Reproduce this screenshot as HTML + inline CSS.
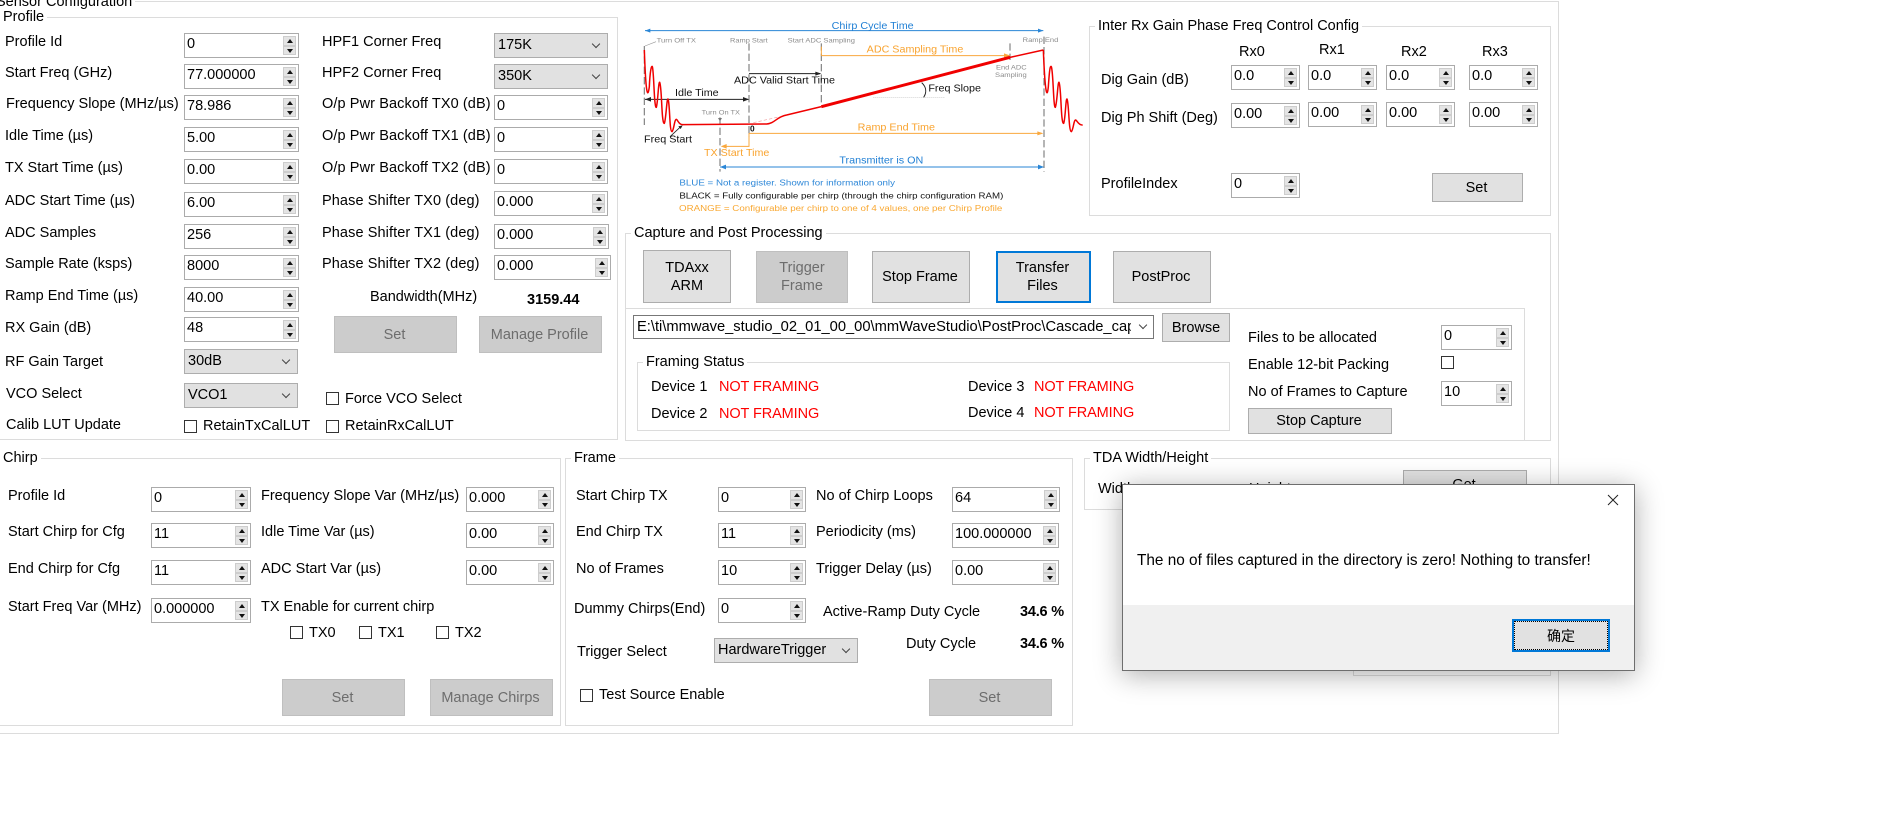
<!DOCTYPE html>
<html><head><meta charset="utf-8"><title>Sensor Configuration</title>
<style>
html,body{margin:0;padding:0;background:#fff}
#r{position:relative;width:1897px;height:823px;overflow:hidden;background:#fff;font-family:"Liberation Sans","Noto Sans CJK SC",sans-serif;font-size:14.5px;color:#000}
#r div,#r p{position:absolute;margin:0;box-sizing:border-box;white-space:nowrap}
.g{border:1px solid #dcdcdc;background:transparent}
.lg{background:#fff;padding:0 3px;height:20px;line-height:20px}
.l{height:20px;line-height:20px}
.i{height:25px;border:1px solid #ababab;background:#fff;line-height:20px;padding-left:2px;overflow:hidden}
.i b,.i u{position:absolute;right:2px;width:13px;background:#e4e4e4;border:1px solid #cdcdcd;box-sizing:border-box;display:block}
.i b{top:2px;height:10px}
.i u{top:12px;height:9px}
.i b:after,.i u:after{content:"";position:absolute;left:3px;width:0;height:0;border-left:3px solid transparent;border-right:3px solid transparent}
.i b:after{top:2px;border-bottom:4px solid #111}
.i u:after{top:2px;border-top:4px solid #111}
.sl{height:25px;border:1px solid #adadad;background:#e1e1e1;line-height:23px;padding-left:3px}
.sl i,.cb i{position:absolute;right:8px;top:7px;width:5px;height:5px;border-right:1px solid #444;border-bottom:1px solid #444;transform:rotate(45deg)}
.b{border:1px solid #adadad;background:#e1e1e1;text-align:center;display:flex;align-items:center;justify-content:center;line-height:18px}
.d{background:#ccc;border-color:#bfbfbf;color:#6d6d6d}
.c{width:13px;height:13px;border:1px solid #333;background:#fff}
.r{color:#f00}
.bd{font-weight:bold}
#dlg{left:1122px;top:484px;width:513px;height:187px;background:#fff;border:1px solid #6e6e6e;box-shadow:0 4px 26px rgba(0,0,0,.32)}
svg{position:absolute}
</style></head><body>
<div id="r">

<div class="g" style="left:-3px;top:1px;width:1562px;height:733px"></div>
<div class="lg" style="left:-7px;top:-8px">Sensor Configuration</div>

<div class="g" style="left:-3px;top:17px;width:621px;height:423px"></div>
<div class="lg" style="left:0;top:7px">Profile</div>

<div class="l" style="left:5px;top:32px">Profile Id</div>
<div class="l" style="left:5px;top:63px">Start Freq (GHz)</div>
<div class="l" style="left:6px;top:94px">Frequency Slope (MHz/µs)</div>
<div class="l" style="left:5px;top:126px">Idle Time (µs)</div>
<div class="l" style="left:5px;top:158px">TX Start Time (µs)</div>
<div class="l" style="left:5px;top:191px">ADC Start Time (µs)</div>
<div class="l" style="left:5px;top:223px">ADC Samples</div>
<div class="l" style="left:5px;top:254px">Sample Rate (ksps)</div>
<div class="l" style="left:5px;top:286px">Ramp End Time (µs)</div>
<div class="l" style="left:5px;top:318px">RX Gain (dB)</div>
<div class="l" style="left:5px;top:352px">RF Gain Target</div>
<div class="l" style="left:6px;top:384px">VCO Select</div>
<div class="l" style="left:6px;top:415px">Calib LUT Update</div>

<div class="i" style="left:184px;top:33px;width:115px">0<b></b><u></u></div>
<div class="i" style="left:184px;top:64px;width:115px">77.000000<b></b><u></u></div>
<div class="i" style="left:184px;top:95px;width:115px">78.986<b></b><u></u></div>
<div class="i" style="left:184px;top:127px;width:115px">5.00<b></b><u></u></div>
<div class="i" style="left:184px;top:159px;width:115px">0.00<b></b><u></u></div>
<div class="i" style="left:184px;top:192px;width:115px">6.00<b></b><u></u></div>
<div class="i" style="left:184px;top:224px;width:115px">256<b></b><u></u></div>
<div class="i" style="left:184px;top:255px;width:115px">8000<b></b><u></u></div>
<div class="i" style="left:184px;top:287px;width:115px">40.00<b></b><u></u></div>
<div class="i" style="left:184px;top:317px;width:115px">48<b></b><u></u></div>
<div class="sl" style="left:184px;top:349px;width:114px">30dB<i></i></div>
<div class="sl" style="left:184px;top:383px;width:114px">VCO1<i></i></div>
<div class="c" style="left:184px;top:420px"></div>
<div class="l" style="left:203px;top:416px">RetainTxCalLUT</div>
<div class="c" style="left:326px;top:420px"></div>
<div class="l" style="left:345px;top:416px">RetainRxCalLUT</div>
<div class="c" style="left:326px;top:392px"></div>
<div class="l" style="left:345px;top:389px">Force VCO Select</div>

<div class="l" style="left:322px;top:32px">HPF1 Corner Freq</div>
<div class="l" style="left:322px;top:63px">HPF2 Corner Freq</div>
<div class="l" style="left:322px;top:94px;letter-spacing:.1px">O/p Pwr Backoff TX0 (dB)</div>
<div class="l" style="left:322px;top:126px;letter-spacing:.1px">O/p Pwr Backoff TX1 (dB)</div>
<div class="l" style="left:322px;top:158px;letter-spacing:.1px">O/p Pwr Backoff TX2 (dB)</div>
<div class="l" style="left:322px;top:191px;letter-spacing:.1px">Phase Shifter TX0 (deg)</div>
<div class="l" style="left:322px;top:223px;letter-spacing:.1px">Phase Shifter TX1 (deg)</div>
<div class="l" style="left:322px;top:254px;letter-spacing:.1px">Phase Shifter TX2 (deg)</div>
<div class="l" style="left:370px;top:287px">Bandwidth(MHz)</div>
<div class="l bd" style="left:527px;top:290px">3159.44</div>

<div class="sl" style="left:494px;top:33px;width:114px">175K<i></i></div>
<div class="sl" style="left:494px;top:64px;width:114px">350K<i></i></div>
<div class="i" style="left:494px;top:95px;width:114px">0<b></b><u></u></div>
<div class="i" style="left:494px;top:127px;width:114px">0<b></b><u></u></div>
<div class="i" style="left:494px;top:159px;width:114px">0<b></b><u></u></div>
<div class="i" style="left:494px;top:191px;width:114px">0.000<b></b><u></u></div>
<div class="i" style="left:494px;top:224px;width:115px">0.000<b></b><u></u></div>
<div class="i" style="left:494px;top:255px;width:117px">0.000<b></b><u></u></div>
<div class="b d" style="left:334px;top:316px;width:123px;height:37px;padding-right:2px">Set</div>
<div class="b d" style="left:479px;top:316px;width:123px;height:37px;padding-right:2px">Manage Profile</div>

<svg style="left:620px;top:0;filter:blur(.35px)" width="480" height="230" viewBox="0 0 1440 690" font-family="Liberation Sans,sans-serif">
<g fill="none" stroke="#808080" stroke-width="3.5" stroke-dasharray="22 9">
<path d="M73 138V375M387 130V410M300 352V515M604 130V315M1170 130V180M1272 110V515"/>
</g>
<path d="M75 138L108 125" stroke="#999" stroke-width="2" fill="none"/>
<path d="M75 92H1270" stroke="#2a86d6" stroke-width="3"/>
<path d="M75 92l16-6v12zM1270 92l-16-6v12z" fill="#2a86d6"/>
<path d="M604 167V140M604 167H1165" stroke="#f9a83e" stroke-width="3" fill="none"/>
<path d="M1172 167l-20-7v14z" fill="#f9a83e"/>
<path d="M387 221H600" stroke="#222" stroke-width="3"/>
<path d="M604 221l-18-6v12z" fill="#222"/>
<path d="M75 298H385" stroke="#222" stroke-width="3"/>
<path d="M75 298l18-7v14zM387 298l-18-7v14z" fill="#222"/>
<path d="M387 400H1265" stroke="#f9a83e" stroke-width="3"/>
<path d="M1270 400l-18-6v12z" fill="#f9a83e"/>
<path d="M387 400V439H310" stroke="#f9a83e" stroke-width="3" fill="none"/>
<path d="M302 439l18-7v14z" fill="#f9a83e"/>
<path d="M300 501H1270" stroke="#2a86d6" stroke-width="3"/>
<path d="M300 501l18-7v14zM1272 501l-18-7v14z" fill="#2a86d6"/>
<path d="M760 292H975" stroke="#bbb" stroke-width="2" stroke-dasharray="3 3"/>
<path d="M905 248C920 262 920 278 911 292" stroke="#222" stroke-width="3" fill="none"/>
<path d="M400 368L480 350" stroke="#f0a0a0" stroke-width="2" stroke-dasharray="10 6"/>
<path d="M73 150C78 300 84 290 88 260C90 215 94 195 97 200C102 215 102 325 109 322C114 305 115 245 119 247C126 260 124 372 133 370C138 360 140 295 144 297C150 310 148 395 156 395C162 390 163 358 169 358C174 360 176 375 190 374L440 372C465 370 470 350 500 345L604 320" stroke="#f00000" stroke-width="4.5" fill="none"/>
<path d="M604 320L1170 172" stroke="#f00000" stroke-width="9" fill="none"/>
<path d="M1170 172L1270 150" stroke="#f00000" stroke-width="4.5" fill="none"/>
<path d="M1270 150C1276 300 1282 290 1285 260C1288 215 1290 195 1294 200C1300 215 1300 325 1306 322C1312 305 1313 245 1317 247C1324 260 1322 372 1331 370C1336 360 1337 295 1341 297C1347 310 1346 395 1354 395C1360 390 1361 360 1367 360C1372 362 1375 376 1388 375" stroke="#f00000" stroke-width="4.5" fill="none"/>
<path d="M150 410L180 382" stroke="#222" stroke-width="2.5"/>
<path d="M188 376l-13 3 7 8z" fill="#222"/>
<path d="M300 364l-6-10h12z" fill="#777"/>
<text x="635" y="87" font-size="29" fill="#1f7fd4" textLength="246" lengthAdjust="spacingAndGlyphs">Chirp Cycle Time</text>
<g font-size="20" fill="#8c8c8c">
<text x="110" y="127" textLength="118" lengthAdjust="spacingAndGlyphs">Turn Off TX</text>
<text x="330" y="127" textLength="113" lengthAdjust="spacingAndGlyphs">Ramp Start</text>
<text x="503" y="127" textLength="202" lengthAdjust="spacingAndGlyphs">Start ADC Sampling</text>
<text x="1208" y="126" textLength="107" lengthAdjust="spacingAndGlyphs">Ramp End</text>
<text x="245" y="344" textLength="115" lengthAdjust="spacingAndGlyphs">Turn On TX</text>
<text x="1128" y="209" textLength="92" lengthAdjust="spacingAndGlyphs">End ADC</text>
<text x="1125" y="231" textLength="95" lengthAdjust="spacingAndGlyphs">Sampling</text>
</g>
<g font-size="29" fill="#f9a32e">
<text x="740" y="158" textLength="290" lengthAdjust="spacingAndGlyphs">ADC Sampling Time</text>
<text x="713" y="391" textLength="232" lengthAdjust="spacingAndGlyphs">Ramp End Time</text>
<text x="252" y="468" textLength="196" lengthAdjust="spacingAndGlyphs">TX Start Time</text>
</g>
<g font-size="29" fill="#111">
<text x="342" y="250" textLength="303" lengthAdjust="spacingAndGlyphs">ADC Valid Start Time</text>
<text x="165" y="288" textLength="131" lengthAdjust="spacingAndGlyphs">Idle Time</text>
<text x="72" y="428" textLength="144" lengthAdjust="spacingAndGlyphs">Freq Start</text>
<text x="925" y="275" textLength="158" lengthAdjust="spacingAndGlyphs">Freq Slope</text>
<text x="390" y="395" font-weight="bold" font-size="25">0</text>
</g>
<text x="658" y="491" font-size="29" fill="#1f7fd4" textLength="252" lengthAdjust="spacingAndGlyphs">Transmitter is ON</text>
<text x="178" y="557" font-size="24" fill="#2f88d8" textLength="647" lengthAdjust="spacingAndGlyphs">BLUE = Not a register. Shown for information only</text>
<text x="178" y="596" font-size="24" fill="#111" textLength="972" lengthAdjust="spacingAndGlyphs">BLACK = Fully configurable per chirp (through the chirp configuration RAM)</text>
<text x="177" y="633" font-size="24" fill="#f9a832" textLength="970" lengthAdjust="spacingAndGlyphs">ORANGE = Configurable per chirp to one of 4 values, one per Chirp Profile</text>
</svg>

<div class="g" style="left:1089px;top:26px;width:462px;height:190px"></div>
<div class="lg" style="left:1095px;top:16px">Inter Rx Gain Phase Freq Control Config</div>
<div class="l" style="left:1239px;top:42px">Rx0</div>
<div class="l" style="left:1319px;top:40px">Rx1</div>
<div class="l" style="left:1401px;top:42px">Rx2</div>
<div class="l" style="left:1482px;top:42px">Rx3</div>
<div class="l" style="left:1101px;top:70px">Dig Gain (dB)</div>
<div class="l" style="left:1101px;top:108px">Dig Ph Shift (Deg)</div>
<div class="l" style="left:1101px;top:174px">ProfileIndex</div>
<div class="i" style="left:1231px;top:65px;width:69px">0.0<b></b><u></u></div>
<div class="i" style="left:1308px;top:65px;width:69px">0.0<b></b><u></u></div>
<div class="i" style="left:1386px;top:65px;width:69px">0.0<b></b><u></u></div>
<div class="i" style="left:1469px;top:65px;width:69px">0.0<b></b><u></u></div>
<div class="i" style="left:1231px;top:103px;width:69px">0.00<b></b><u></u></div>
<div class="i" style="left:1308px;top:102px;width:69px">0.00<b></b><u></u></div>
<div class="i" style="left:1386px;top:102px;width:69px">0.00<b></b><u></u></div>
<div class="i" style="left:1469px;top:102px;width:69px">0.00<b></b><u></u></div>
<div class="i" style="left:1231px;top:173px;width:69px">0<b></b><u></u></div>
<div class="b" style="left:1432px;top:173px;width:91px;height:29px;padding-right:2px">Set</div>

<div class="g" style="left:625px;top:233px;width:926px;height:208px"></div>
<div class="lg" style="left:631px;top:223px">Capture and Post Processing</div>
<div class="b" style="left:643px;top:250px;width:88px;height:53px">TDAxx<br>ARM</div>
<div class="b d" style="left:756px;top:251px;width:92px;height:52px">Trigger<br>Frame</div>
<div class="b" style="left:872px;top:251px;width:98px;height:52px;padding-right:2px">Stop Frame</div>
<div class="b" style="left:996px;top:251px;width:95px;height:52px;border:2px solid #0078d7;padding-right:2px">Transfer<br>Files</div>
<div class="b" style="left:1113px;top:251px;width:98px;height:52px;padding-right:2px">PostProc</div>
<div style="left:625px;top:308px;width:900px;height:133px;border-top:1px solid #dcdcdc;border-right:1px solid #dcdcdc"></div>

<div class="cb" style="left:633px;top:315px;width:521px;height:24px;border:1px solid #777;background:#fff;line-height:22px;padding-left:3px;overflow:hidden;font-size:14.7px"><span style="display:block;width:494px;overflow:hidden">E:\ti\mmwave_studio_02_01_00_00\mmWaveStudio\PostProc\Cascade_capture</span><i style="right:7px;top:6px"></i></div>
<div class="b" style="left:1162px;top:313px;width:68px;height:29px">Browse</div>

<div class="g" style="left:637px;top:362px;width:593px;height:69px"></div>
<div class="lg" style="left:643px;top:352px">Framing Status</div>
<div class="l" style="left:651px;top:377px">Device 1</div>
<div class="l r" style="left:719px;top:377px;letter-spacing:-.1px">NOT FRAMING</div>
<div class="l" style="left:651px;top:404px">Device 2</div>
<div class="l r" style="left:719px;top:404px;letter-spacing:-.1px">NOT FRAMING</div>
<div class="l" style="left:968px;top:377px">Device 3</div>
<div class="l r" style="left:1034px;top:377px;letter-spacing:-.1px">NOT FRAMING</div>
<div class="l" style="left:968px;top:403px">Device 4</div>
<div class="l r" style="left:1034px;top:403px;letter-spacing:-.1px">NOT FRAMING</div>

<div class="l" style="left:1248px;top:328px">Files to be allocated</div>
<div class="l" style="left:1248px;top:355px">Enable 12-bit Packing</div>
<div class="l" style="left:1248px;top:382px">No of Frames to Capture</div>
<div class="i" style="left:1441px;top:325px;width:71px">0<b></b><u></u></div>
<div class="c" style="left:1441px;top:356px"></div>
<div class="i" style="left:1441px;top:381px;width:71px">10<b></b><u></u></div>
<div class="b" style="left:1248px;top:408px;width:144px;height:26px;padding-right:2px">Stop Capture</div>

<div class="g" style="left:-3px;top:458px;width:564px;height:268px"></div>
<div class="lg" style="left:0;top:448px">Chirp</div>
<div class="l" style="left:8px;top:486px">Profile Id</div>
<div class="l" style="left:8px;top:522px">Start Chirp for Cfg</div>
<div class="l" style="left:8px;top:559px">End Chirp for Cfg</div>
<div class="l" style="left:8px;top:597px">Start Freq Var (MHz)</div>
<div class="i" style="left:151px;top:487px;width:100px">0<b></b><u></u></div>
<div class="i" style="left:151px;top:523px;width:100px">11<b></b><u></u></div>
<div class="i" style="left:151px;top:560px;width:100px">11<b></b><u></u></div>
<div class="i" style="left:151px;top:598px;width:100px">0.000000<b></b><u></u></div>
<div class="l" style="left:261px;top:486px">Frequency Slope Var (MHz/µs)</div>
<div class="l" style="left:261px;top:522px">Idle Time Var (µs)</div>
<div class="l" style="left:261px;top:559px">ADC Start Var (µs)</div>
<div class="l" style="left:261px;top:597px">TX Enable for current chirp</div>
<div class="i" style="left:466px;top:487px;width:88px">0.000<b></b><u></u></div>
<div class="i" style="left:466px;top:523px;width:88px">0.00<b></b><u></u></div>
<div class="i" style="left:466px;top:560px;width:88px">0.00<b></b><u></u></div>
<div class="c" style="left:290px;top:626px"></div>
<div class="l" style="left:309px;top:623px">TX0</div>
<div class="c" style="left:359px;top:626px"></div>
<div class="l" style="left:378px;top:623px">TX1</div>
<div class="c" style="left:436px;top:626px"></div>
<div class="l" style="left:455px;top:623px">TX2</div>
<div class="b d" style="left:282px;top:679px;width:123px;height:37px;padding-right:2px">Set</div>
<div class="b d" style="left:430px;top:679px;width:123px;height:37px;padding-right:2px">Manage Chirps</div>

<div class="g" style="left:565px;top:458px;width:508px;height:268px"></div>
<div class="lg" style="left:571px;top:448px">Frame</div>
<div class="l" style="left:576px;top:486px">Start Chirp TX</div>
<div class="l" style="left:576px;top:522px">End Chirp TX</div>
<div class="l" style="left:576px;top:559px">No of Frames</div>
<div class="l" style="left:574px;top:599px">Dummy Chirps(End)</div>
<div class="l" style="left:577px;top:642px">Trigger Select</div>
<div class="i" style="left:718px;top:487px;width:88px">0<b></b><u></u></div>
<div class="i" style="left:718px;top:523px;width:88px">11<b></b><u></u></div>
<div class="i" style="left:718px;top:560px;width:88px">10<b></b><u></u></div>
<div class="i" style="left:718px;top:598px;width:88px">0<b></b><u></u></div>
<div class="l" style="left:816px;top:486px">No of Chirp Loops</div>
<div class="l" style="left:816px;top:522px">Periodicity (ms)</div>
<div class="l" style="left:816px;top:559px">Trigger Delay (µs)</div>
<div class="i" style="left:952px;top:487px;width:108px">64<b></b><u></u></div>
<div class="i" style="left:952px;top:523px;width:107px">100.000000<b></b><u></u></div>
<div class="i" style="left:952px;top:560px;width:107px">0.00<b></b><u></u></div>
<div class="l" style="left:823px;top:602px">Active-Ramp Duty Cycle</div>
<div class="l bd" style="left:1020px;top:602px;letter-spacing:-.2px">34.6 %</div>
<div class="l" style="left:906px;top:634px">Duty Cycle</div>
<div class="l bd" style="left:1020px;top:634px;letter-spacing:-.2px">34.6 %</div>
<div class="sl" style="left:714px;top:638px;width:144px;height:25px">HardwareTrigger<i></i></div>
<div class="c" style="left:580px;top:689px"></div>
<div class="l" style="left:599px;top:685px">Test Source Enable</div>
<div class="b d" style="left:929px;top:679px;width:123px;height:37px;padding-right:2px">Set</div>

<div class="g" style="left:1084px;top:458px;width:467px;height:52px"></div>
<div class="lg" style="left:1090px;top:448px">TDA Width/Height</div>
<div class="l" style="left:1098px;top:479px">Width</div>
<div class="l" style="left:1249px;top:479px">Height</div>
<div class="b" style="left:1403px;top:470px;width:124px;height:30px;padding-right:2px">Get</div>
<div class="g" style="left:1353px;top:640px;width:198px;height:36px"></div>

<div id="dlg">
  <div style="left:14px;top:66px;height:20px;line-height:20px;font-size:15.35px">The no of files captured in the directory is zero! Nothing to transfer!</div>
  <svg style="left:484px;top:9px" width="12" height="12" viewBox="0 0 12 12"><path d="M1 1L11 11M11 1L1 11" stroke="#222" stroke-width="1" fill="none"/></svg>
  <div style="left:0;top:120px;width:511px;height:65px;background:#f0f0f0"></div>
  <div style="left:389px;top:134px;width:98px;height:33px;background:#e1e1e1;border:2px solid #0078d7;outline:1px dotted #000;outline-offset:-3px;display:flex;align-items:center;justify-content:center;font-size:14px">确定</div>
</div>

</div>
</body></html>
